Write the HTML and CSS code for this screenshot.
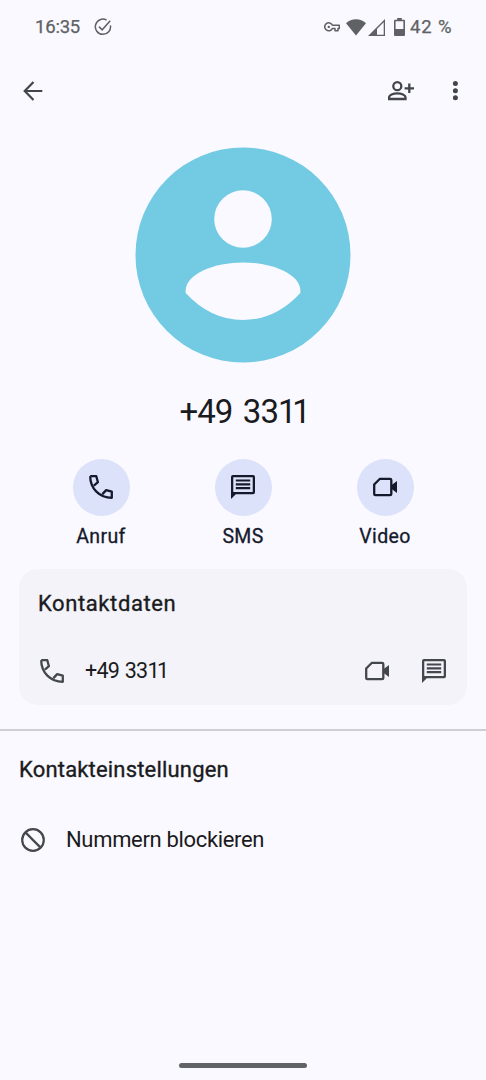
FILE: index.html
```html
<!DOCTYPE html>
<html lang="de">
<head>
<meta charset="utf-8">
<title>Kontakt</title>
<link rel="stylesheet" href="styles.css">
</head>
<body>
<svg class="defs" aria-hidden="true">
  <symbol id="call" viewBox="0 0 24 24"><path d="M1.200 1.200H7.300L8.900 7.200 4.900 10.600M1.200 1.200C1.200 13.500 10.500 22.800 22.800 22.800V16.700L17.200 15.100 13.400 19.100" fill="none" stroke="currentColor" stroke-width="2.300" stroke-linejoin="round"/></symbol>
  <symbol id="chat" viewBox="2 2 20 20"><path fill-rule="evenodd" d="M3.600 2h16.800a1.600 1.600 0 0 1 1.600 1.600v12.800a1.600 1.600 0 0 1-1.600 1.600H6l-4 4V3.600A1.600 1.600 0 0 1 3.600 2zM3.900 3.900v12.200h16.200V3.900zM6 5.700h12v1.800H6zm0 3.200h12v1.800H6zm0 3.200h12v1.800H6z"/></symbol>
  <symbol id="video" viewBox="0 0 24 24"><path d="M6.900 3.800h10.100q1.300 0 1.300 1.200v14q0 1.200-1.200 1.200H2.400Q1.200 20.200 1.200 19V9.500z" fill="none" stroke="currentColor" stroke-width="2.300"/><path d="M18 10.600l6-4.700v12.200L18 13.400z"/></symbol>
</svg>
<div class="screen">
  <header class="status">
    <span class="clock">16:35</span>
    <svg class="task" viewBox="0 0 18 18" fill="none" stroke="currentColor" stroke-width="1.500"><path d="M12.600 2.100A7.600 7.600 0 1 0 16.400 7.300M5 8.600l3.200 3.200 8-9"/></svg>
    <span class="spacer"></span>
    <svg class="key" viewBox="0 0 16 10" fill="none" stroke="currentColor" stroke-width="1.500"><path d="M8.400 3.200H15.300V6.400H14V8.800H11V6.400H8.400A4 4 0 1 1 8.400 3.200z" stroke-linejoin="round"/><circle cx="4.800" cy="4.900" r="1.200" fill="currentColor" stroke="none"/></svg>
    <svg class="wifi" viewBox="0 0 20 17"><path d="M0 4.200Q4.200.2 10 .2T20 4.200L10 16.600z"/></svg>
    <svg class="signal" viewBox="0 0 17 17"><path fill-rule="evenodd" d="M0 17L17 0v17zM9 10v5.700h6.700V3.200z"/></svg>
    <svg class="battery" viewBox="0 0 11 18"><path fill-rule="evenodd" d="M3.200 0h4.600v1.700H10q1 0 1 1V17q0 1-1 1H1q-1 0-1-1V2.700q0-1 1-1h2.200zM1.600 3.300v7.800h7.800V3.300z"/></svg>
    <span class="percent">42 %</span>
  </header>
  <nav class="appbar">
    <svg class="back" viewBox="0 0 20 20" fill="none" stroke="currentColor" stroke-width="2.200"><path d="M19.300 10H2M10.500 1L1.700 10l8.800 9"/></svg>
    <span class="spacer"></span>
    <svg class="add" viewBox="0 0 26 20" fill="none" stroke="currentColor" stroke-width="2.300"><circle cx="9.300" cy="5.200" r="4"/><path d="M1.100 18v-1.800c0-2.200 4-3.800 8.200-3.800s8.200 1.600 8.200 3.800V18zM16.600 7.300H26M21.300 2.600V12"/></svg>
    <svg class="more" viewBox="0 0 6 20"><circle cx="3.400" cy="2.600" r="2.500"/><circle cx="3.400" cy="9.700" r="2.500"/><circle cx="3.400" cy="16.800" r="2.500"/></svg>
  </nav>
  <main>
    <svg class="avatar" viewBox="0.500 0.500 216 216"><circle class="disc" cx="107.500" cy="107.500" r="107.500"/><circle class="figure" cx="107.500" cy="71.500" r="28.800"/><path class="figure" d="M50.200 145.500C48 127 78 115 107.500 115s59.500 12 57.300 30.500Q140 172.500 107.500 172.500T50.200 145.500z"/></svg>
    <h1 class="name">+49 33<span class="ones">11</span></h1>
    <div class="actions">
      <div class="action"><span class="bubble"><svg class="icon"><use href="#call"/></svg></span><span class="label">Anruf</span></div>
      <div class="action"><span class="bubble"><svg class="icon"><use href="#chat"/></svg></span><span class="label">SMS</span></div>
      <div class="action"><span class="bubble"><svg class="icon"><use href="#video"/></svg></span><span class="label">Video</span></div>
    </div>
    <section class="card">
      <h2 class="title data">Kontaktdaten</h2>
      <div class="row">
        <svg class="icon"><use href="#call"/></svg>
        <span class="number">+49 33<span class="ones">11</span></span>
        <span class="spacer"></span>
        <svg class="icon"><use href="#video"/></svg>
        <svg class="icon chat"><use href="#chat"/></svg>
      </div>
    </section>
    <section class="settings">
      <h2 class="title prefs">Kontakteinstellungen</h2>
      <div class="block">
        <svg class="icon" viewBox="0 0 24 24" fill="none" stroke="currentColor" stroke-width="2.200"><circle cx="12" cy="12" r="10.800"/><path d="M4.400 4.400l15.200 15.200"/></svg>
        <span class="text">Nummern blockieren</span>
      </div>
    </section>
  </main>
  <div class="handle"></div>
</div>
</body>
</html>
```
FILE: styles.css
```css
* { box-sizing: border-box; }
body { margin: 0; background: #faf9ff; font-family: "Roboto", sans-serif; color: #1a1b20; }
svg { display: block; flex: none; fill: currentColor; }
svg[fill="none"] { fill: none; }
.defs { display: none; }
.screen { height: 1080px; display: flex; flex-direction: column; overflow: hidden; }
.spacer { flex: 1; }
.status { height: 54px; display: flex; align-items: center; padding: 0 34px 0 35px; color: #606164; font-size: 18.5px; -webkit-text-stroke: .25px; }
.clock { width: 46px; white-space: nowrap; letter-spacing: -.2px; }
.task { width: 18px; height: 18px; margin-left: 13px; }
.key { width: 16px; height: 10px; }
.wifi { width: 20px; height: 17px; margin: 0 2px 0 6px; }
.signal { width: 17px; height: 17px; }
.battery { width: 11px; height: 18px; margin: 0 5px 0 9px; }
.percent { width: 42px; white-space: nowrap; letter-spacing: .9px; }
.appbar { height: 73px; display: flex; align-items: center; padding: 0 28px 0 23px; color: #43454d; }
.back { width: 20px; height: 20px; }
.add { width: 26px; height: 20px; margin-right: 38px; }
.more { width: 6px; height: 20px; }
main { flex: 1; display: flex; flex-direction: column; }
.avatar { width: 216px; height: 216px; margin: 20.5px 0 0 135.5px; overflow: visible; }
.disc { fill: #72cae3; }
.figure { fill: #faf9ff; }
.name { margin: 28px 0 0; height: 40px; line-height: 40px; font-size: 33px; font-weight: 400; text-align: center; letter-spacing: -.9px; word-spacing: 3px; }
.ones { letter-spacing: -.13em; }
.actions { display: grid; grid-template-columns: repeat(3, 142px); justify-content: center; margin-top: 27px; color: #141a2c; }
.action { display: flex; flex-direction: column; align-items: center; }
.bubble { width: 57px; height: 57px; border-radius: 50%; background: #dce2f9; display: flex; align-items: center; justify-content: center; }
.icon { width: 24px; height: 24px; }
.label { margin-top: 8px; line-height: 26px; font-size: 19.5px; letter-spacing: .35px; -webkit-text-stroke: .3px; }
.card { margin: 19px 19px 0; height: 136px; padding: 21px 21px 0 19px; border-radius: 19px; background: #f3f3f9; }
.title { margin: 0; line-height: 28px; font-size: 22px; font-weight: 400; -webkit-text-stroke: .35px; }
.data { letter-spacing: .6px; }
.prefs { letter-spacing: .18px; }
.row { display: flex; align-items: center; margin-top: 39px; height: 28px; padding-left: 2px; color: #45474e; }
.number { margin-left: 21px; font-size: 21.5px; letter-spacing: -.75px; word-spacing: 1px; color: #1a1b20; }
.number .ones { letter-spacing: -.12em; }
.chat { margin-left: 33px; }
.bubble .icon { margin: 0 1px 0 0; }
.settings { margin-top: 24px; border-top: 2px solid #cdced6; padding: 25px 19px 0; }
.block { display: flex; align-items: center; height: 30px; margin-top: 41px; padding-left: 2px; color: #45474e; }
.text { margin-left: 21px; font-size: 22px; letter-spacing: -.33px; color: #1a1b20; }
.handle { width: 128px; height: 5px; border-radius: 3px; background: #626365; margin: 0 auto 12px; }
```
